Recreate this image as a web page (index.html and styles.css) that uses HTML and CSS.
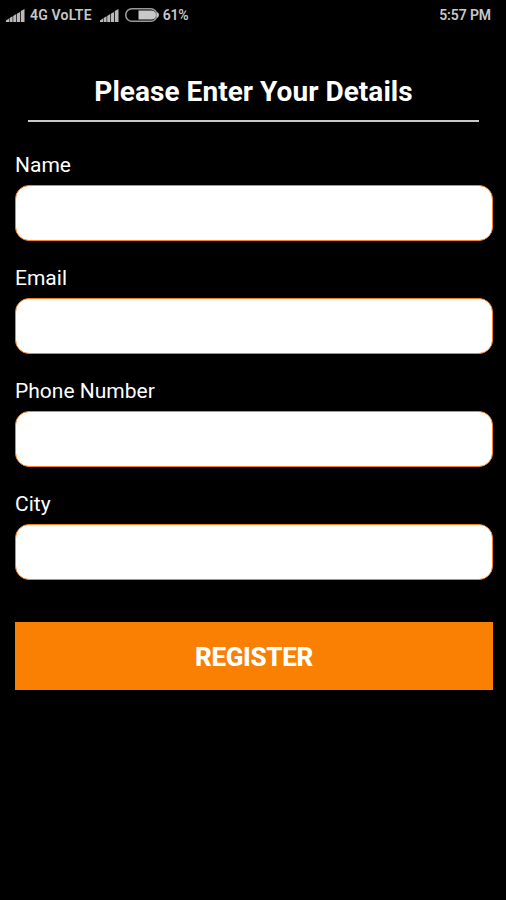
FILE: index.html
```html
<!DOCTYPE html>
<html lang="en">

<head>
    <meta charset="UTF-8">
    <meta name="viewport" content="width=device-width, initial-scale=1.0">
    <title>Register</title>
    <link rel="stylesheet" href="styles.css">
</head>

<body>
    <div class="statusbar">
        <div class="status-left">
            <svg class="signal" width="19" height="13" viewBox="0 0 19 13">
                <path d="M0 13V11.5L3 9.5V13zM3.6 13V9L6.6 7.2V13zM7.2 13V7L10.2 5V13zM10.9 13V4.8L14 3V13zM14.8 13V2L18.5 0V13z" />
            </svg>
            <span class="network">4G VoLTE</span>
            <svg class="signal signal2" width="19" height="13" viewBox="0 0 19 13">
                <path d="M0 13V11.5L3 9.5V13zM3.6 13V9L6.6 7.2V13zM7.2 13V7L10.2 5V13zM10.9 13V4.8L14 3V13zM14.8 13V2L18.5 0V13z" />
            </svg>
            <svg class="battery" width="34" height="14" viewBox="0 0 34 14">
                <rect x="0.8" y="0.8" width="31" height="12.4" rx="6" />
                <path class="level" d="M13.5 2.5H27Q31 3 31 7T27 11.5H13.5z" />
                <path class="tip" d="M32 4Q34 5 34 7T32 10z" />
            </svg>
            <span class="percent">61%</span>
        </div>
        <span class="time">5:57 PM</span>
    </div>
    <h1 class="mainHeading">Please Enter Your Details</h1>
    <form class="details">
        <label for="name">Name</label>
        <input type="text" id="name" name="name">
        <label for="email">Email</label>
        <input type="email" id="email" name="email">
        <label for="phone">Phone Number</label>
        <input type="tel" id="phone" name="phone">
        <label for="city">City</label>
        <input type="text" id="city" name="city">
        <button type="submit" class="register">REGISTER</button>
    </form>
</body>

</html>
```

FILE: styles.css
```css
* {
    box-sizing: border-box;
}

body {
    margin: 0;
    min-height: 900px;
    background: #000;
    color: #fff;
    font-family: Roboto, sans-serif;
}

.statusbar {
    display: flex;
    justify-content: space-between;
    align-items: center;
    height: 30px;
    padding: 0 15px 0 6px;
    color: #c8c8c8;
    font-size: 14px;
    font-weight: 600;
}

.status-left {
    display: flex;
    align-items: center;
}

.signal {
    fill: #b9b9b9;
}

.network {
    margin-left: 5px;
    letter-spacing: 0.2px;
}

.signal2 {
    margin-left: 8px;
}

.battery {
    margin: 0 4px 0 6px;
}

.battery rect {
    fill: none;
    stroke: #999;
    stroke-width: 1.6;
}

.level,
.tip {
    fill: #c8c8c8;
}

.percent {
    letter-spacing: -0.3px;
}

.time {
    letter-spacing: -0.1px;
}

.mainHeading {
    height: 92px;
    margin: 0 27px 0 28px;
    padding-top: 45px;
    border-bottom: 2px solid #c8c8c8;
    font-size: 28px;
    line-height: 34px;
    font-weight: 700;
    letter-spacing: 0.04px;
    text-align: center;
    white-space: nowrap;
}

.details {
    display: flex;
    flex-direction: column;
    padding: 28px 13px 0 15px;
}

.details label {
    height: 35px;
    font-size: 21px;
    line-height: 31px;
}

.details input {
    height: 56px;
    margin: 0 0 22px;
    padding: 0 14px;
    border: 1px solid #f58025;
    border-radius: 14px;
    background: #fff;
    font: 22px Roboto, sans-serif;
    outline: none;
}

.register {
    height: 68px;
    margin-top: 20px;
    padding: 2px 0 0;
    border: none;
    background: #fa8003;
    color: #fff;
    font: 800 26px Roboto, sans-serif;
    letter-spacing: -0.3px;
}
```
